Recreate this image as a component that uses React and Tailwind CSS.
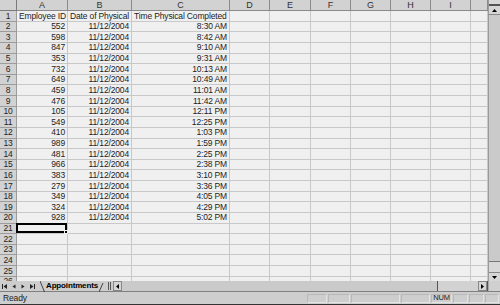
import React from "react";

const colW = ["w-[51px]", "w-[64px]", "w-[98px]", "w-[40px]", "w-[41px]", "w-[40px]", "w-[40px]", "w-[40px]", "w-[40px]", "w-[17px]"];
const letters = ["A", "B", "C", "D", "E", "F", "G", "H", "I", ""];

const data = [
  ["552", "8:30 AM"], ["598", "8:42 AM"], ["847", "9:10 AM"], ["353", "9:31 AM"],
  ["732", "10:13 AM"], ["649", "10:49 AM"], ["459", "11:01 AM"], ["476", "11:42 AM"],
  ["105", "12:11 PM"], ["549", "12:25 PM"], ["410", "1:03 PM"], ["989", "1:59 PM"],
  ["481", "2:25 PM"], ["966", "2:38 PM"], ["383", "3:10 PM"], ["279", "3:36 PM"],
  ["349", "4:05 PM"], ["324", "4:29 PM"], ["928", "5:02 PM"],
];

function rowCells(r) {
  if (r === 1) return [["Employee ID", "l"], ["Date of Physical", "l"], ["Time Physical Completed", "l"]];
  const d = data[r - 2];
  if (d) return [[d[0], "r"], ["11/12/2004", "r"], [d[1], "r"]];
  return [];
}

function Row({ r }) {
  const cells = rowCells(r);
  return (
    <div className="flex h-[10.64px] shrink-0">
      <div className="w-[17px] shrink-0 bg-[#d2d2d2] border-r border-b border-[#9c9c9c] flex items-center justify-center leading-none text-[#222]">
        {r}
      </div>
      {colW.map((w, i) => {
        const c = cells[i];
        return (
          <div
            key={i}
            className={`${w} shrink-0 relative bg-[#f0f0f0] border-r border-b border-[#c8c8c8] flex items-center leading-none whitespace-nowrap overflow-visible ${c && c[1] === "r" ? "justify-end pr-[2px]" : "justify-start pl-[2px]"}`}
          >
            {c ? c[0] : ""}
            {r === 21 && i === 0 && (
              <div className="absolute -left-[1px] -top-[1px] right-0 bottom-0 border-2 border-black">
                <div className="absolute -right-[3px] -bottom-[3px] w-[4px] h-[4px] bg-black border border-[#f0f0f0]" />
              </div>
            )}
          </div>
        );
      })}
    </div>
  );
}

function Panel({ w, children }) {
  return (
    <div className={`${w} h-[9px] shrink-0 mr-[1px] border border-[#b8b8b8] border-r-[#e4e4e4] border-b-[#e4e4e4] flex items-center justify-center text-[7.5px]`}>
      {children}
    </div>
  );
}

export default function App() {
  const rows = Array.from({ length: 26 }, (_, i) => i + 1);
  return (
    <div
      className="w-[500px] h-[305px] overflow-hidden bg-[#cdcdcd] flex flex-col text-[8.5px] tracking-[-0.15px] text-[#1c1c1c]"
      style={{ fontFamily: '"Liberation Sans", Arial, sans-serif' }}
    >
      {/* grid area */}
      <div className="flex h-[281px] shrink-0 overflow-hidden">
        <div className="w-[488px] flex flex-col overflow-hidden">
          <div className="flex h-[11px] shrink-0">
            <div className="w-[17px] shrink-0 bg-[#d2d2d2] border-r border-b border-[#7a7a7a]" />
            {colW.map((w, i) => (
              <div
                key={i}
                className={`${w} shrink-0 bg-[#d2d2d2] border-r border-b border-[#8a8a8a] flex items-center justify-center leading-none text-[9px] text-[#333]`}
              >
                {letters[i]}
              </div>
            ))}
          </div>
          {rows.map((r) => (
            <Row key={r} r={r} />
          ))}
        </div>
        {/* vertical scrollbar */}
        <div className="w-[12px] flex flex-col bg-[#c4c4c4] border-l border-[#9a9a9a]">
          <div className="h-[4px] bg-[#d8d8d8]" />
          <div className="h-[2px] bg-[#555]" />
          <div className="h-[9px] bg-[#d6d6d6] border-b border-[#888] flex items-center justify-center">
            <svg width="5" height="3" viewBox="0 0 5 3"><polygon points="2.5,0 5,3 0,3" fill="#000" /></svg>
          </div>
          <div className="h-[247px] bg-[#cacaca] border-b border-[#777]" />
          <div className="flex-1 bg-[#d8d8d8]" />
          <div className="h-[9px] bg-[#d6d6d6] border-t border-[#888] flex items-center justify-center">
            <svg width="5" height="3" viewBox="0 0 5 3"><polygon points="0,0 5,0 2.5,3" fill="#000" /></svg>
          </div>
        </div>
      </div>

      {/* tab bar */}
      <div className="flex h-[11px] shrink-0 items-stretch bg-[#cdcdcd] border-b border-[#808080]">
        <div className="w-[40px] flex items-center px-[2px] gap-[5px]">
          <svg width="5" height="5" viewBox="0 0 5 5"><rect x="0" y="0" width="1" height="5" fill="#222" /><polygon points="5,0 5,5 1.5,2.5" fill="#222" /></svg>
          <svg width="4" height="5" viewBox="0 0 4 5"><polygon points="3.5,0.5 3.5,4.5 0.5,2.5" fill="#222" /></svg>
          <svg width="4" height="5" viewBox="0 0 4 5"><polygon points="0.5,0.5 0.5,4.5 3.5,2.5" fill="#222" /></svg>
          <svg width="5" height="5" viewBox="0 0 5 5"><polygon points="0,0 0,5 3.5,2.5" fill="#222" /><rect x="4" y="0" width="1" height="5" fill="#222" /></svg>
        </div>
        <div className="relative flex items-center">
          <svg width="5" height="11" viewBox="0 0 5 11"><line x1="0" y1="0" x2="4.5" y2="11" stroke="#222" strokeWidth="0.8" /></svg>
          <span className="font-bold text-[8px] px-[1px] leading-none text-black">Appointments</span>
          <svg width="5" height="11" viewBox="0 0 5 11"><line x1="0" y1="11" x2="4" y2="2" stroke="#222" strokeWidth="0.8" /></svg>
        </div>
        <div className="w-[4px]" />
        <div className="w-[3px] border-l border-r border-[#555] my-[1px]" />
        <div className="w-[9px] ml-[2px] bg-[#d6d6d6] border border-[#888] flex items-center justify-center">
          <svg width="3" height="5" viewBox="0 0 3 5"><polygon points="3,0 3,5 0,2.5" fill="#000" /></svg>
        </div>
        <div className="w-[316px] bg-[#cacaca] border-r border-[#555]" />
        <div className="flex-1 bg-[#d2d2d2]" />
        <div className="w-[9px] bg-[#d6d6d6] border border-[#888] flex items-center justify-center">
          <svg width="3" height="5" viewBox="0 0 3 5"><polygon points="0,0 3,2.5 0,5" fill="#000" /></svg>
        </div>
        <div className="w-[1px] bg-[#555]" />
        <div className="w-[12px] bg-[#d0d0d0] border-l border-[#aaa]" />
      </div>

      {/* status bar */}
      <div className="flex h-[13px] shrink-0 items-center bg-[#cecece] border-b border-[#333] leading-none text-[8.5px]">
        <div className="flex-1 pl-[3px]">Ready</div>
        <Panel w="w-[20px]" />
        <Panel w="w-[22px]" />
        <Panel w="w-[49px]" />
        <Panel w="w-[29px]" />
        <Panel w="w-[21px]">NUM</Panel>
        <Panel w="w-[15px]" />
        <Panel w="w-[15px]" />
        <Panel w="w-[14px]" />
      </div>
    </div>
  );
}
